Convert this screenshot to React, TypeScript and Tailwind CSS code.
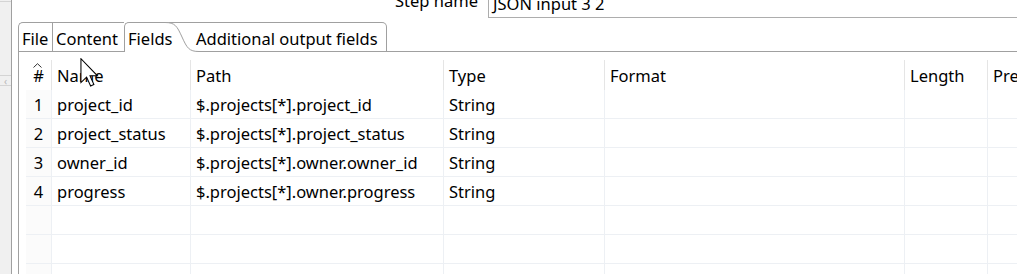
const columns = [
  { key: "name", label: "Name", w: "w-[139px]" },
  { key: "path", label: "Path", w: "w-[253px]" },
  { key: "type", label: "Type", w: "w-[161px]" },
  { key: "format", label: "Format", w: "w-[300px]" },
  { key: "length", label: "Length", w: "w-[83px]" },
  { key: "precision", label: "Precision", w: "w-[100px]" },
];

const rows = [
  { name: "project_id", path: "$.projects[*].project_id", type: "String" },
  { name: "project_status", path: "$.projects[*].project_status", type: "String" },
  { name: "owner_id", path: "$.projects[*].owner.owner_id", type: "String" },
  { name: "progress", path: "$.projects[*].owner.progress", type: "String" },
  null,
  null,
  null,
];

function Cursor() {
  return (
    <svg className="absolute left-[80px] top-[58px] z-30" width="19" height="29" viewBox="0 0 12.5 19.5">
      <path
        d="M0.5 0.5 L0.5 16.5 L4.3 12.8 L7 18.8 L9.2 17.8 L6.6 12 L11.6 12 Z"
        fill="#ffffff"
        stroke="#000000"
        strokeWidth="0.7"
        strokeLinejoin="miter"
      />
    </svg>
  );
}

export default function App() {
  return (
    <div className="relative w-[1017px] h-[274px] overflow-hidden bg-white flex font-['Noto_Sans',sans-serif] text-[16.5px] text-black">
      {/* collapsed side panel */}
      <div className="w-[12px] shrink-0 bg-[#f0f0f0] border-r border-[#a0a0a0] flex flex-col">
        <div className="h-[2px] border-b border-[#d4d4d4]" />
        <div className="mt-[73px] h-[11px] border-y border-[#d4d4d4] flex items-center justify-center text-[10px] leading-none text-[#b8b8b8]">
          ‹
        </div>
      </div>

      <div className="flex-1 min-w-0 overflow-hidden flex flex-col pl-[6px]">
        {/* step name */}
        <div className="h-[22px] shrink-0">
          <div className="-mt-[13px] h-[31px] flex justify-end gap-[10px]">
            <div className="pt-[4px] leading-[20px] whitespace-nowrap">Step name</div>
            <div className="w-[529px] shrink-0 border-l border-b border-[#adadad] pt-[7px] pl-[4px] leading-[20px] whitespace-nowrap">
              JSON input 3 2
            </div>
          </div>
        </div>

        {/* tabs */}
        <div className="h-[30px] shrink-0 flex leading-[20px]">
          <div className="w-[34px] shrink-0 border-l border-t border-b border-[#a0a0a0] rounded-tl-[5px] pl-[3px] pt-[6px]">File</div>
          <div className="w-[72px] shrink-0 border-l border-t border-b border-[#a0a0a0] pl-[3px] pt-[6px]">Content</div>
          <div className="relative z-20 w-[41px] shrink-0 border-l border-t border-[#a0a0a0] rounded-tl-[5px] bg-white pl-[3px] pt-[6px] whitespace-nowrap overflow-visible">
            Fields
          </div>
          <svg className="relative z-10 shrink-0" width="34" height="30" viewBox="0 0 34 30">
            <path d="M0 0.5 C10 0.5 12 4 17 15 S24 29.5 34 29.5 L34 31 L0 31 Z" fill="#ffffff" />
            <path d="M0 0.5 C10 0.5 12 4 17 15 S24 29.5 34 29.5" fill="none" stroke="#a0a0a0" strokeWidth="1" />
          </svg>
          <div className="-ml-[34px] w-[222px] shrink-0 border-t border-r border-b border-[#a0a0a0] rounded-tr-[5px] pl-[31px] pt-[6px] whitespace-nowrap">
            Additional output fields
          </div>
          <div className="flex-1 border-b border-[#a0a0a0]" />
        </div>

        {/* fields table */}
        <div className="flex-1 border-l border-[#a0a0a0] pl-[7px] pt-[8px]">
          <div className="flex h-[30px]">
            <div className="relative w-[26px] shrink-0 border-r border-[#e5e5e5] text-center pt-[5px] leading-[20px]">
              <svg className="absolute left-[7px] top-[3px]" width="9" height="5" viewBox="0 0 9 5">
                <path d="M0.5 4.5 L4.5 0.7 L8.5 4.5" fill="none" stroke="#333333" strokeWidth="1" />
              </svg>
              <span className="inline-block pt-[1px]">#</span>
            </div>
            {columns.map((c) => (
              <div key={c.key} className={`${c.w} shrink-0 border-r border-[#e5e5e5] pl-[5px] pt-[6px] leading-[20px] whitespace-nowrap`}>
                {c.label}
              </div>
            ))}
          </div>

          {rows.map((r, i) => (
            <div key={i} className="flex h-[29px] border-b border-[#edf0f4]">
              <div className="w-[26px] shrink-0 border-r border-[#edf0f4] bg-[#fbfbfb] text-center pt-[5px] leading-[20px]">
                {r ? i + 1 : ""}
              </div>
              <div className="w-[139px] shrink-0 border-r border-[#edf0f4] pl-[5px] pt-[5px] leading-[20px] whitespace-nowrap">
                {r?.name}
              </div>
              <div className="w-[253px] shrink-0 border-r border-[#edf0f4] pl-[5px] pt-[5px] leading-[20px] whitespace-nowrap">
                {r?.path}
              </div>
              <div className="w-[161px] shrink-0 border-r border-[#edf0f4] pl-[5px] pt-[5px] leading-[20px]">
                {r?.type}
              </div>
              <div className="w-[300px] shrink-0 border-r border-[#edf0f4]" />
              <div className="w-[83px] shrink-0 border-r border-[#edf0f4]" />
              <div className="w-[100px] shrink-0 border-r border-[#edf0f4]" />
            </div>
          ))}
        </div>
      </div>

      <Cursor />
    </div>
  );
}
